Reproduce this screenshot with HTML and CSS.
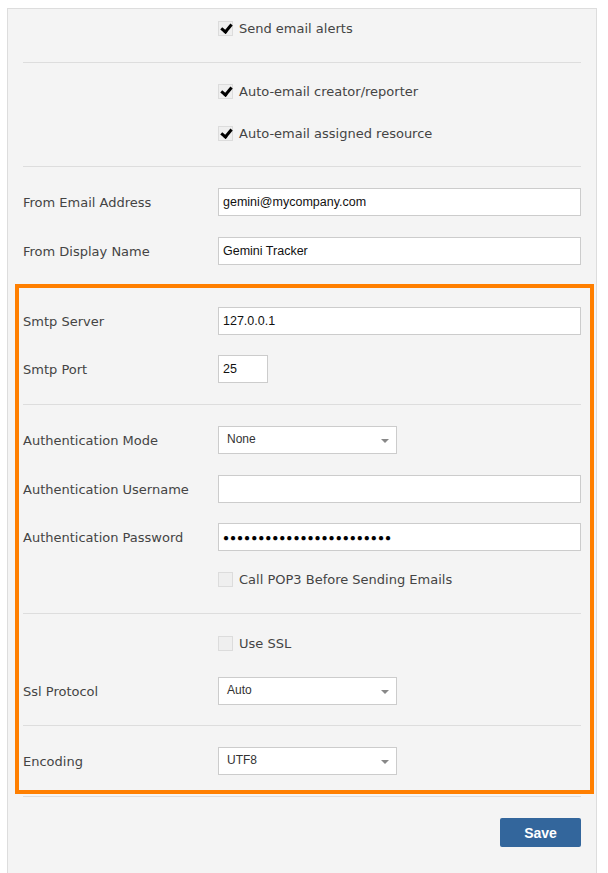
FILE: index.html
```html
<!DOCTYPE html>
<html>
<head>
<meta charset="utf-8">
<link rel="stylesheet" href="styles.css">
</head>
<body>
<div class="panel">
  <div class="row check-row r-first">
    <span class="label"></span>
    <label class="check"><span class="box checked"></span>Send email alerts</label>
  </div>
  <div class="sep sep-a"></div>
  <div class="row check-row r-c2">
    <span class="label"></span>
    <label class="check"><span class="box checked"></span>Auto-email creator/reporter</label>
  </div>
  <div class="row check-row r-c3">
    <span class="label"></span>
    <label class="check"><span class="box checked"></span>Auto-email assigned resource</label>
  </div>
  <div class="sep sep-b"></div>
  <div class="row r-g21">
    <span class="label">From Email Address</span>
    <div class="input wide">gemini@mycompany.com</div>
  </div>
  <div class="row r-g21">
    <span class="label">From Display Name</span>
    <div class="input wide">Gemini Tracker</div>
  </div>

  <div class="highlight">
    <div class="row r-g19">
      <span class="label">Smtp Server</span>
      <div class="input wide">127.0.0.1</div>
    </div>
    <div class="row r-g20">
      <span class="label">Smtp Port</span>
      <div class="input port">25</div>
    </div>
    <div class="sep sep-c"></div>
    <div class="row r-g21">
      <span class="label">Authentication Mode</span>
      <div class="select">None<span class="arrow"></span></div>
    </div>
    <div class="row r-g21">
      <span class="label">Authentication Username</span>
      <div class="input wide"></div>
    </div>
    <div class="row r-g20">
      <span class="label">Authentication Password</span>
      <div class="input wide dots">&#9679;&#9679;&#9679;&#9679;&#9679;&#9679;&#9679;&#9679;&#9679;&#9679;&#9679;&#9679;&#9679;&#9679;&#9679;&#9679;&#9679;&#9679;&#9679;&#9679;&#9679;&#9679;&#9679;&#9679;</div>
    </div>
    <div class="row check-row r-g14">
      <span class="label"></span>
      <label class="check"><span class="box"></span>Call POP3 Before Sending Emails</label>
    </div>
    <div class="sep sep-d"></div>
    <div class="row check-row r-g15">
      <span class="label"></span>
      <label class="check"><span class="box"></span>Use SSL</label>
    </div>
    <div class="row r-g20">
      <span class="label">Ssl Protocol</span>
      <div class="select">Auto<span class="arrow"></span></div>
    </div>
    <div class="sep sep-e"></div>
    <div class="row r-g21 r-last">
      <span class="label">Encoding</span>
      <div class="select">UTF8<span class="arrow"></span></div>
    </div>
  </div>
  <div class="sep sep-f"></div>
  <div class="actions">
    <button class="save">Save</button>
  </div>
</div>
</body>
</html>
```
FILE: styles.css
```css
html, body {
  margin: 0;
  padding: 0;
  background: #ffffff;
}
body {
  font-family: "DejaVu Sans", Verdana, sans-serif;
  font-size: 13px;
  color: #444444;
}
.panel {
  margin: 8px 11px 0 7px;
  width: 590px;
  height: 900px;
  background: #f4f4f4;
  border: 1px solid #dddddd;
  border-bottom: none;
  padding: 0 15px;
  box-sizing: border-box;
}
.row {
  display: flex;
  align-items: center;
  height: 28px;
}
.label {
  width: 195px;
  flex: none;
  color: #444444;
  padding-top: 1px;
}
.check {
  display: flex;
  align-items: center;
  color: #444444;
}
.box {
  width: 15px;
  height: 15px;
  box-sizing: border-box;
  border: 1px solid #dcdcdc;
  background: #efefef;
  margin-right: 6px;
  position: relative;
}
.box.checked::after {
  content: "";
  position: absolute;
  left: 4px;
  top: 0px;
  width: 4px;
  height: 8px;
  border: solid #000;
  border-width: 0 3px 3px 0;
  transform: rotate(40deg);
}
.input {
  height: 28px;
  box-sizing: border-box;
  border: 1px solid #cccccc;
  background: #ffffff;
  font-family: "Liberation Sans", Arial, sans-serif;
  font-size: 12.5px;
  color: #111;
  padding: 0 4px;
  display: flex;
  align-items: center;
}
.input.wide {
  width: 363px;
}
.input.port {
  width: 50px;
}
.input.dots {
  font-size: 10px;
  letter-spacing: 1px;
  color: #000;
}
.select {
  width: 179px;
  height: 28px;
  box-sizing: border-box;
  border: 1px solid #cccccc;
  background: #ffffff;
  font-family: "Liberation Sans", Arial, sans-serif;
  font-size: 12px;
  color: #333;
  padding: 0 8px 2px;
  display: flex;
  align-items: center;
  position: relative;
}
.arrow {
  position: absolute;
  right: 7px;
  top: 12px;
  width: 0;
  height: 0;
  border-left: 4px solid transparent;
  border-right: 4px solid transparent;
  border-top: 4px solid #888;
}
.sep {
  border-top: 1px solid #dddddd;
  height: 0;
}
.r-first { margin-top: 5px; }
.sep-a { margin-top: 20px; }
.r-c2 { margin-top: 14px; }
.r-c3 { margin-top: 14px; }
.sep-b { margin-top: 19px; }
.r-g21 { margin-top: 21px; }
.r-g20 { margin-top: 20px; }
.r-g19 { margin-top: 19px; }
.r-g14 { margin-top: 14px; }
.r-g15 { margin-top: 15px; }
.sep-c { margin-top: 21px; }
.sep-d, .sep-e { margin-top: 20px; }
.highlight {
  margin: 19px -13px 0 -8px;
  border: 4px solid #ff7f00;
  padding: 0 9px 15px 4px;
}
.sep-f { margin-top: 2px; }
.actions {
  display: flex;
  justify-content: flex-end;
  margin-top: 21px;
}
.save {
  width: 81px;
  height: 29px;
  border: none;
  border-radius: 2px;
  background: #33669c;
  color: #ffffff;
  font-family: "Liberation Sans", Arial, sans-serif;
  font-weight: bold;
  font-size: 14px;
  padding: 0;
}
```
